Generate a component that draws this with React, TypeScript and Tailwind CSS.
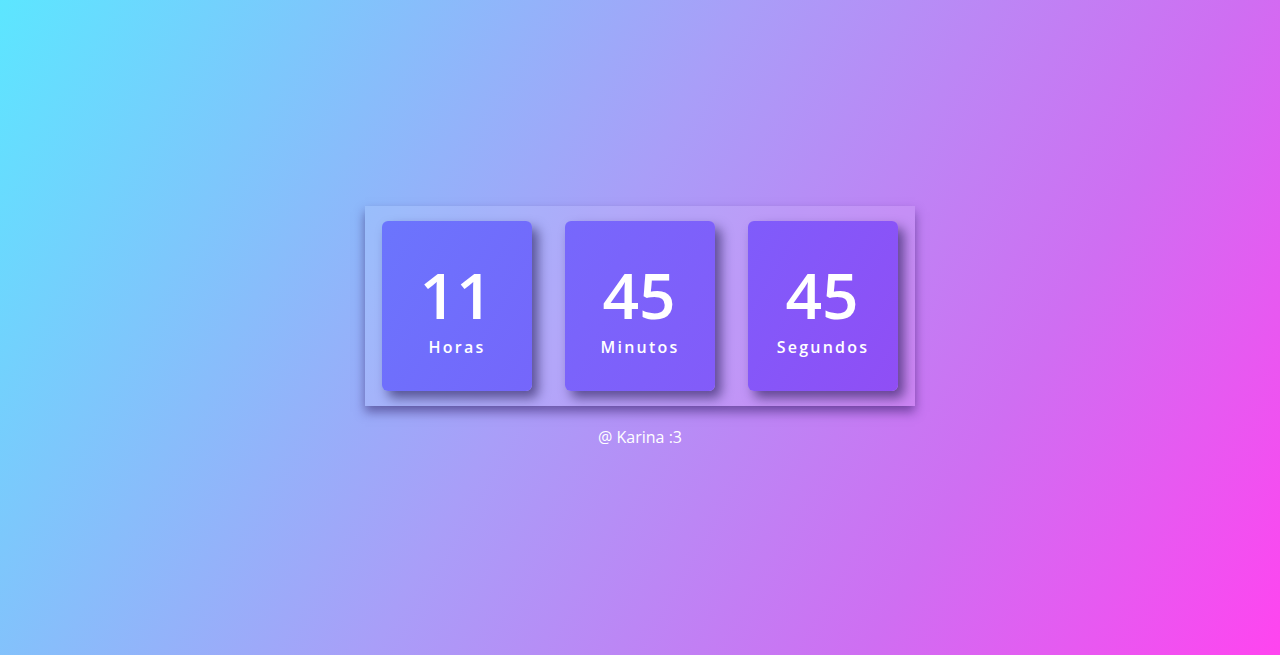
import React from "react";

const units = [
  { value: "11", label: "Horas", bg: "bg-[linear-gradient(120deg,#6b75fd,#7566fb)]" },
  { value: "45", label: "Minutos", bg: "bg-[linear-gradient(120deg,#7668fc,#835bf9)]" },
  { value: "45", label: "Segundos", bg: "bg-[linear-gradient(120deg,#7f5cfb,#904ef5)]" },
];

export default function App() {
  return (
    <div
      className="min-h-screen w-full flex flex-col items-center justify-center bg-[linear-gradient(120deg,#5ce6ff_0%,#a99ef8_45%,#cf6ef2_75%,#ff44f0_100%)]"
      style={{ fontFamily: '"Open Sans", sans-serif' }}
    >
      <div className="flex gap-[33px] px-[17px] py-[15px] bg-white/10 shadow-[0_6px_10px_rgba(40,20,90,0.5)]">
        {units.map((u) => (
          <div
            key={u.label}
            className={`w-[150px] h-[170px] rounded-md flex flex-col items-center justify-center text-white shadow-[6px_7px_12px_rgba(30,20,80,0.6)] ${u.bg}`}
          >
            <span className="text-[64px] font-semibold leading-none mt-[10px] pr-[2px]">{u.value}</span>
            <span className="text-[16px] font-semibold tracking-[2.2px] mt-[8px]">{u.label}</span>
          </div>
        ))}
      </div>
      <p className="mt-[19px] text-white text-[16px]">@ Karina :3</p>
    </div>
  );
}
